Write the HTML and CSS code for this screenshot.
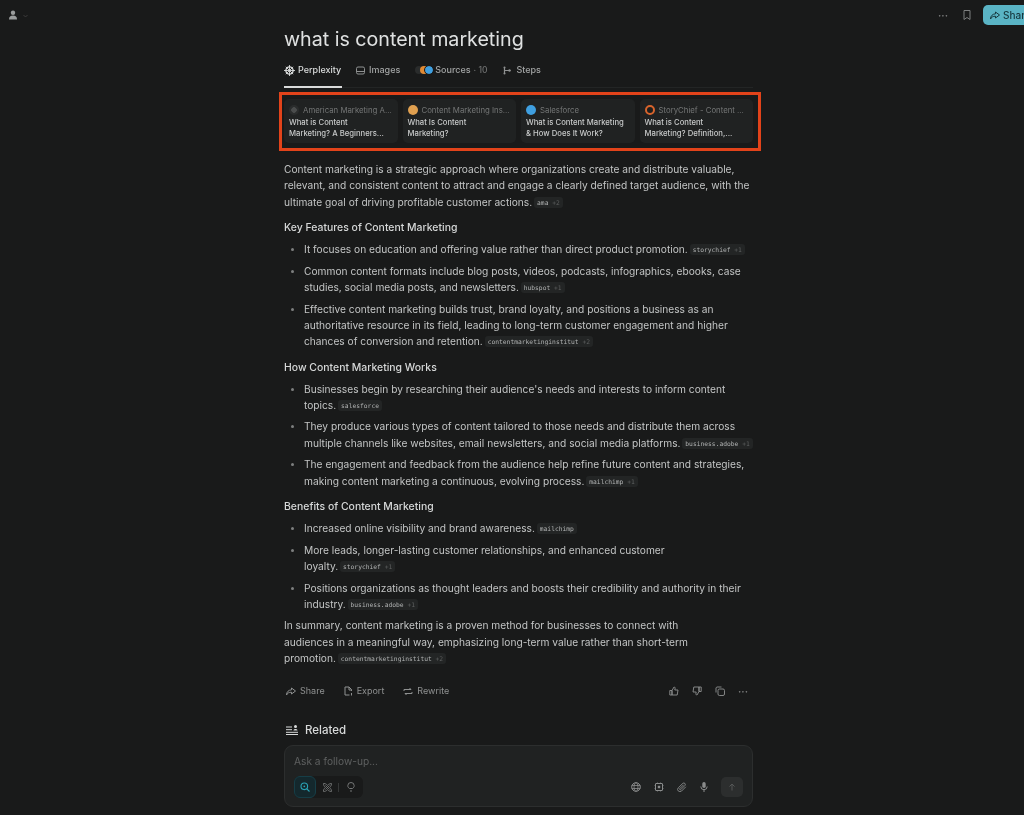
FILE: index.html
```html
<!DOCTYPE html>
<html>
<head>
<meta name="viewport" content="width=device-width, initial-scale=1.0">
<title>what is content marketing</title>
<link rel="stylesheet" href="styles.css">
</head>

<body>

<header class="topbar">
     <div class="account">
          <svg class="ic" width="10" height="10" viewBox="0 0 10 10"><circle cx="5" cy="2.8" r="2.2" fill="#9a9c9c"/><path d="M1 9.5c0-3 1.5-4 4-4s4 1 4 4z" fill="#9a9c9c"/></svg>
          <svg class="chev" width="5" height="4" viewBox="0 0 5 4"><path d="M.5 1l2 2 2-2" fill="none" stroke="#444" stroke-width=".8"/></svg>
     </div>
     <div class="topbar-right">
          <span class="dots">&middot;&middot;&middot;</span>
          <svg class="ic" width="8" height="10" viewBox="0 0 8 10"><path d="M1 .5h6v9L4 7.500l-3 2z" fill="none" stroke="#7d7f7f"/></svg>
          <button class="share-btn">
               <svg width="10" height="9" viewBox="0 0 10 9"><path d="M5.500 1l4 3-4 3V5.200C3 5.200 1.500 6 .5 8c0-3 2-5 5-5.200z" fill="none" stroke="#17383f" stroke-width="1"/></svg>
               Share
          </button>
     </div>
</header>

<main class="column">
     <h1>what is content marketing</h1>

     <nav class="tabs">
          <a class="tab active">
               <svg width="11" height="11" viewBox="0 0 11 11"><circle cx="5.500" cy="5.500" r="3.600" fill="none" stroke="#d8dada" stroke-width="1.400"/><path d="M5.500 0v11M0 5.500h11M1.800 1.800l7.400 7.400M9.200 1.800L1.800 9.200" stroke="#d8dada" stroke-width=".9"/></svg>
               Perplexity
          </a>
          <a class="tab">
               <svg width="9" height="9" viewBox="0 0 9 9"><rect x=".5" y="1" width="8" height="7" rx="1.500" fill="none" stroke="#8f9191"/><path d="M.5 5.500h8" stroke="#8f9191"/></svg>
               Images
          </a>
          <a class="tab">
               <span class="favs">
                    <i class="fav fav-grey"></i>
                    <i class="fav fav-orange"></i>
                    <i class="fav fav-blue"></i>
               </span>
               Sources <span class="count">&middot; 10</span>
          </a>
          <a class="tab">
               <svg width="9" height="9" viewBox="0 0 9 9"><path d="M1.500 1v7M1.500 4.500h6" stroke="#8f9191" stroke-width="1.200"/><circle cx="1.500" cy="1.500" r="1" fill="#8f9191"/><circle cx="1.500" cy="7.500" r="1" fill="#8f9191"/><circle cx="6.500" cy="4.500" r="1.200" fill="#8f9191"/></svg>
               Steps
          </a>
     </nav>

     <section class="sources">
          <div class="card">
               <div class="card-src"><i class="src-icon src-ama"></i><span>American Marketing A...</span></div>
               <div class="card-title">What is Content<br>Marketing? A Beginners...</div>
          </div>
          <div class="card">
               <div class="card-src"><i class="src-icon src-cmi"></i><span>Content Marketing Ins...</span></div>
               <div class="card-title">What Is Content<br>Marketing?</div>
          </div>
          <div class="card">
               <div class="card-src"><i class="src-icon src-sf"></i><span>Salesforce</span></div>
               <div class="card-title">What is Content Marketing<br>&amp; How Does It Work?</div>
          </div>
          <div class="card">
               <div class="card-src"><i class="src-icon src-sc"></i><span>StoryChief - Content ...</span></div>
               <div class="card-title">What is Content<br>Marketing? Definition,...</div>
          </div>
     </section>

     <article class="answer">
          <p>Content marketing is a strategic approach where organizations create and distribute valuable,<br>relevant, and consistent content to attract and engage a clearly defined target audience, with the<br>ultimate goal of driving profitable customer actions. <span class="cite">ama <em>+2</em></span></p>

          <h2>Key Features of Content Marketing</h2>
          <ul>
               <li>It focuses on education and offering value rather than direct product promotion. <span class="cite">storychief <em>+1</em></span></li>
               <li>Common content formats include blog posts, videos, podcasts, infographics, ebooks, case<br>studies, social media posts, and newsletters. <span class="cite">hubspot <em>+1</em></span></li>
               <li>Effective content marketing builds trust, brand loyalty, and positions a business as an<br>authoritative resource in its field, leading to long-term customer engagement and higher<br>chances of conversion and retention. <span class="cite">contentmarketinginstitut <em>+2</em></span></li>
          </ul>

          <h2>How Content Marketing Works</h2>
          <ul>
               <li>Businesses begin by researching their audience's needs and interests to inform content<br>topics. <span class="cite">salesforce</span></li>
               <li>They produce various types of content tailored to those needs and distribute them across<br>multiple channels like websites, email newsletters, and social media platforms. <span class="cite">business.adobe <em>+1</em></span></li>
               <li>The engagement and feedback from the audience help refine future content and strategies,<br>making content marketing a continuous, evolving process. <span class="cite">mailchimp <em>+1</em></span></li>
          </ul>

          <h2>Benefits of Content Marketing</h2>
          <ul>
               <li>Increased online visibility and brand awareness. <span class="cite">mailchimp</span></li>
               <li>More leads, longer-lasting customer relationships, and enhanced customer<br>loyalty. <span class="cite">storychief <em>+1</em></span></li>
               <li>Positions organizations as thought leaders and boosts their credibility and authority in their<br>industry. <span class="cite">business.adobe <em>+1</em></span></li>
          </ul>

          <p class="summary">In summary, content marketing is a proven method for businesses to connect with<br>audiences in a meaningful way, emphasizing long-term value rather than short-term<br>promotion. <span class="cite">contentmarketinginstitut <em>+2</em></span></p>
     </article>

     <div class="actions">
          <a class="action">
               <svg width="10" height="9" viewBox="0 0 10 9"><path d="M5.500 1l4 3-4 3V5.200C3 5.200 1.500 6 .5 8c0-3 2-5 5-5.200z" fill="none" stroke="#8f9191"/></svg>
               Share
          </a>
          <a class="action">
               <svg width="9" height="10" viewBox="0 0 9 10"><path d="M5.500 9H1V1h4l2.500 2.500V5M5 1v3h3M7.500 7v2.500" fill="none" stroke="#8f9191"/></svg>
               Export
          </a>
          <a class="action">
               <svg width="10" height="9" viewBox="0 0 10 9"><path d="M1 4V2.500h7L6.500 1M9 5v1.500H2L3.500 8" fill="none" stroke="#8f9191"/></svg>
               Rewrite
          </a>
          <div class="action-icons">
               <svg width="10" height="10" viewBox="0 0 10 10"><path d="M3 4.500L5 1c1 0 1.300.8 1 2l-.2 1H9l-.8 5H3zM.8 4.500H3V9H.8z" fill="none" stroke="#8f9191" stroke-width=".9"/></svg>
               <svg width="10" height="10" viewBox="0 0 10 10"><path d="M7 5.500L5 9c-1 0-1.300-.8-1-2l.2-1H1l.8-5H7zM9.200 5.500H7V1h2.200z" fill="none" stroke="#8f9191" stroke-width=".9"/></svg>
               <svg width="10" height="10" viewBox="0 0 10 10"><rect x="3" y="3" width="6.500" height="6.500" rx="1.500" fill="none" stroke="#8f9191" stroke-width=".9"/><path d="M6.500 1H2a1.500 1.500 0 0 0-1 1v4.500" fill="none" stroke="#8f9191" stroke-width=".9"/></svg>
               <span class="dots">&middot;&middot;&middot;</span>
          </div>
     </div>

     <div class="related">
          <svg width="12" height="10" viewBox="0 0 12 10"><path d="M0 2h6M0 4.700h6M0 7.300h12M0 9.500h12" stroke="#d8dada" stroke-width="1"/><circle cx="9.500" cy="1.500" r="1.500" fill="#d8dada"/><path d="M7.500 5.500c0-1 1-1.500 2-1.500s2 .5 2 1.500z" fill="#d8dada"/></svg>
          Related
     </div>

     <div class="ask">
          <div class="ask-input">Ask a follow-up...</div>
          <div class="ask-bar">
               <div class="modes">
                    <span class="mode mode-on">
                         <svg width="10" height="10" viewBox="0 0 10 10"><circle cx="4.300" cy="4.300" r="3.300" fill="none" stroke="#2aa3b5" stroke-width="1.100"/><path d="M6.800 6.800L9.500 9.500" stroke="#2aa3b5" stroke-width="1.100"/><circle cx="4.300" cy="4.300" r=".9" fill="#2aa3b5"/></svg>
                    </span>
                    <span class="mode">
                         <svg width="9" height="9" viewBox="0 0 9 9"><path d="M4.500 2.500C3.500 .5 .5 .2.500.5S.5 3.500 2.500 4.500C.5 5.500.2 8.500.5 8.500s3 0 4-2c1 2 4 2 4 2s0-3-2-4c2-1 2-4 2-4s-3 0-4 2z" fill="none" stroke="#757777" stroke-width=".9"/><path d="M2.500 2.500l4 4M6.500 2.500l-4 4" stroke="#757777" stroke-width=".9"/></svg>
                    </span>
                    <i class="mode-sep"></i>
                    <span class="mode">
                         <svg width="8" height="10" viewBox="0 0 8 10"><path d="M2.500 6.500C1 5.500.8 4.500.8 3.700a3.200 3.200 0 0 1 6.400 0c0 .8-.3 1.800-1.700 2.800zM3 9h2" fill="none" stroke="#757777"/></svg>
                    </span>
               </div>
               <div class="ask-tools">
                    <svg width="10" height="10" viewBox="0 0 10 10"><circle cx="5" cy="5" r="4.300" fill="none" stroke="#8a8c8c"/><ellipse cx="5" cy="5" rx="2" ry="4.300" fill="none" stroke="#8a8c8c" stroke-width=".8"/><path d="M.7 3.500h8.600M.7 6.500h8.600" stroke="#8a8c8c" stroke-width=".8"/></svg>
                    <svg width="10" height="10" viewBox="0 0 10 10"><rect x="1.500" y="1.500" width="7" height="7" rx=".5" fill="none" stroke="#8a8c8c"/><rect x="3.800" y="3.800" width="2.400" height="2.400" fill="#8a8c8c"/><path d="M3.500 .5v1M6.500 .5v1M3.500 8.500v1M6.500 8.500v1M.5 3.500h1M.5 6.500h1M8.500 3.500h1M8.500 6.500h1" stroke="#8a8c8c" stroke-width=".7"/></svg>
                    <svg width="10" height="10" viewBox="0 0 10 10"><path d="M8.800 4.800L4.600 9a2.200 2.200 0 0 1-3.300-3.200l4.600-4.500a1.500 1.500 0 0 1 2.100 2.100L3.800 7.600a.7.7 0 0 1-1-1L6.600 2.800" fill="none" stroke="#8a8c8c" stroke-width=".9"/></svg>
                    <svg width="8" height="10" viewBox="0 0 8 10"><rect x="2.300" y="0" width="3.400" height="6" rx="1.700" fill="#8a8c8c"/><path d="M.8 4.500a3.200 3.200 0 0 0 6.400 0M4 7.700V10" fill="none" stroke="#8a8c8c"/></svg>
                    <button class="send">
                         <svg width="8" height="8" viewBox="0 0 8 8"><path d="M4 7.500V1M1.500 3.500L4 1l2.500 2.500" fill="none" stroke="#555757"/></svg>
                    </button>
               </div>
          </div>
     </div>
</main>

</body>
</html>
```

FILE: styles.css
```css
* {box-sizing: border-box;}

html, body {height: 100%}

body {
     margin: 0;
     background-color: #191a1a;
     color: #c3c5c5;
     font-family: Inter, "Noto Sans", sans-serif;
     font-size: 10.200px;
     line-height: 16.250px;
     overflow: hidden;
     filter: blur(.3px);
}

svg {display: block; flex-shrink: 0}

.topbar {
     height: 27px;
     padding: 5px 0 0 8px;
     display: flex;
     justify-content: space-between;
     align-items: flex-start;
}

.account {
     height: 20px;
     display: flex;
     align-items: center;
     gap: 5px;
}

.chev {margin-top: 1px}

.topbar-right {
     display: flex;
     align-items: center;
     gap: 15px;
     height: 20px;
     margin-right: -21px;
}

.dots {
     color: #7d7f7f;
     font-size: 10px;
     font-weight: 700;
     line-height: 10px;
}

.share-btn {
     width: 62px;
     height: 20px;
     padding: 0 0 0 7px;
     margin-left: -3px;
     border: none;
     border-radius: 5px;
     background-color: #5ab4c5;
     color: #17383f;
     font-family: Inter, sans-serif;
     font-size: 10px;
     font-weight: 500;
     display: flex;
     align-items: center;
     gap: 3px;
     white-space: nowrap;
}

.column {
     width: 469px;
     margin-left: 284px;
}

h1 {
     margin: 0;
     height: 24px;
     font-size: 19.650px;
     font-weight: 400;
     line-height: 24px;
     color: #dfe1e1;
}

.tabs {
     margin-top: 8px;
     height: 29px;
     padding-top: 1px;
     padding-bottom: 7px;
     border-bottom: 1px solid #232525;
     display: flex;
     align-items: center;
     gap: 14px;
     position: relative;
}

.tab {
     display: flex;
     align-items: center;
     gap: 4px;
     height: 21px;
     color: #a2a4a4;
     font-size: 9px;
     font-weight: 500;
     white-space: nowrap;
}

.tab.active {
     color: #dadcdc;
     width: 58px;
     gap: 3px;
     position: relative;
}

/* underline sits on top of the tab row's border */
.tab.active::after {
     content: "";
     position: absolute;
     left: 0;
     right: 0;
     bottom: -7px;
     height: 2px;
     background-color: #d8dada;
}

.favs {
     display: flex;
     width: 18px;
     margin-left: 1px;
     margin-right: -2px;
}

.fav {
     display: block;
     width: 8px;
     height: 8px;
     border-radius: 50%;
     margin-right: -3px;
}

.fav-grey {background-color: #2a2c2c}
.fav-orange {background-color: #e08a35}
.fav-blue {background-color: #3f9fe0; outline: 1px solid #191a1a}

.count {
     color: #6f7171;
     font-size: 8.500px;
     margin-left: -1px;
     margin-right: 2px;
}

.sources {
     margin: 4px -8px 0 -5px;
     height: 59px;
     padding: 4px 5px 5px 2px;
     border: 3px solid #e2431a;
     display: grid;
     grid-template-columns: repeat(4, 1fr);
     gap: 5px;
}

.card {
     background-color: #202222;
     border-radius: 5px;
     padding: 5px 5px 0;
     min-width: 0;
}

.card-src {
     display: flex;
     align-items: center;
     gap: 3px;
     height: 12px;
     color: #747676;
     font-size: 7.800px;
     line-height: 12px;
     white-space: nowrap;
}

.src-icon {
     display: block;
     width: 10px;
     height: 10px;
     border-radius: 50%;
     margin-right: 1px;
     flex-shrink: 0;
}

.src-ama {background: radial-gradient(circle, #4a4c4c 0 2.500px, #2a2c2c 3px)}
.src-cmi {background-color: #e0a050}
.src-sf {background-color: #3f9fe0}
.src-sc {background-color: #1d1f1f; border: 2px solid #d8642c}

.card-title {
     margin-top: 2px;
     color: #c8caca;
     font-size: 7.700px;
     font-weight: 500;
     line-height: 10.500px;
     white-space: nowrap;
}

/* lines are broken by hand to follow the source text */
.answer {
     margin-top: 10px;
     white-space: nowrap;
}

.answer p {margin: 0}

.answer h2 {
     margin: 10.500px 0 4.500px;
     font-size: 10.450px;
     font-weight: 500;
     line-height: 16.250px;
     color: #d6d8d8;
}

.answer ul {
     margin: 0;
     padding: 0 0 0 20px;
     list-style: none;
}

.answer li {
     margin-bottom: 5.400px;
     position: relative;
}

.answer li:last-child {margin-bottom: 0}

.answer li::before {
     content: "";
     position: absolute;
     left: -13px;
     top: 7px;
     width: 3px;
     height: 3px;
     border-radius: 50%;
     background-color: #7d7f7f;
}

.answer .summary {margin-top: 5.400px}

.cite {
     padding: 2px 3px;
     margin-left: -1px;
     border-radius: 3px;
     background-color: #232525;
     color: #b0b2b2;
     font-family: "DejaVu Sans Mono", "Liberation Mono", monospace;
     font-size: 6.300px;
     line-height: 1;
     vertical-align: 1px;
}

.cite em {
     font-style: normal;
     color: #5e6060;
}

.actions {
     margin-top: 15px;
     height: 20px;
     padding-left: 2px;
     display: flex;
     align-items: center;
     gap: 19px;
     color: #8f9191;
     font-size: 9px;
}

.action {
     display: flex;
     align-items: center;
     gap: 4px;
}

.action-icons {
     margin-left: auto;
     margin-right: 5px;
     display: flex;
     align-items: center;
     gap: 13px;
}

.related {
     margin-top: 19px;
     height: 20px;
     padding-left: 2px;
     display: flex;
     align-items: center;
     gap: 7px;
     color: #d8dada;
     font-size: 11.500px;
     font-weight: 500;
}

.ask {
     margin-top: 5px;
     height: 62px;
     padding: 7px 9px 0;
     border: 1px solid #2c2e2e;
     border-radius: 9px;
     background-color: #202222;
}

.ask-input {
     color: #5e6060;
     font-size: 10.200px;
     line-height: 16px;
}

.ask-bar {
     margin-top: 7px;
     display: flex;
     justify-content: space-between;
     align-items: center;
}

.modes {
     height: 22px;
     width: 69px;
     border-radius: 6px;
     background-color: #191a1a;
     display: flex;
     align-items: center;
}

.mode {
     width: 22px;
     height: 22px;
     display: flex;
     align-items: center;
     justify-content: center;
     border-radius: 6px;
}

.mode-on {
     background-color: #14282d;
     border: 1px solid #163e47;
}

.mode-sep {
     width: 1px;
     height: 9px;
     background-color: #353737;
     margin-right: 1px;
}

.ask-tools {
     display: flex;
     align-items: center;
     gap: 13px;
}

.send {
     width: 22px;
     height: 20px;
     padding: 0;
     border: none;
     border-radius: 5px;
     background-color: #2c2e2e;
     display: flex;
     align-items: center;
     justify-content: center;
}
```
